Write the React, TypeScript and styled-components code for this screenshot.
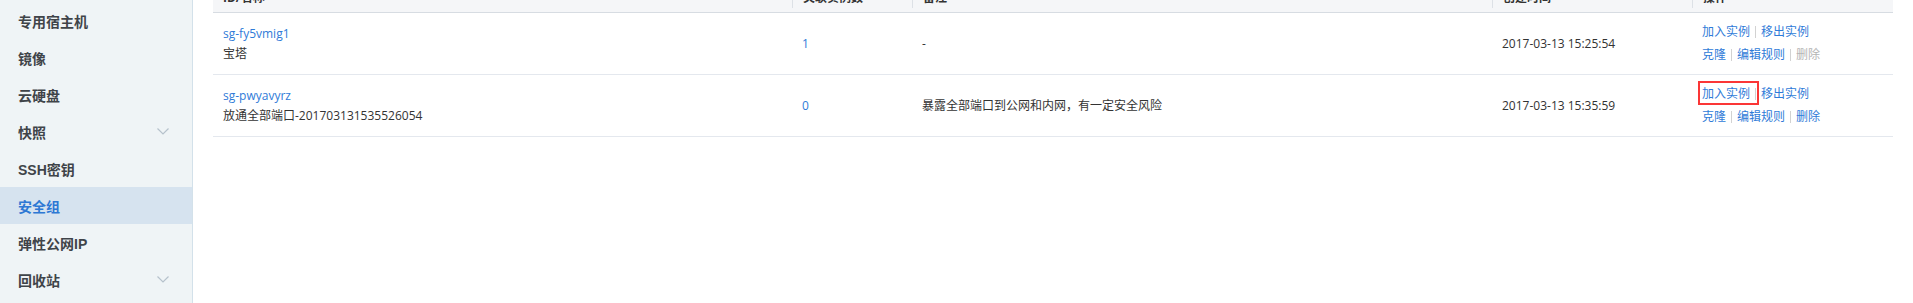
import React from "react";
import styled, { createGlobalStyle } from "styled-components";

const GlobalStyle = createGlobalStyle`
  html, body { margin: 0; padding: 0; background: #ffffff; overflow: hidden; }
  body { font-family: "Open Sans", "Noto Sans CJK SC", sans-serif; font-size: 12px; color: #333; }
  * { box-sizing: border-box; }
`;

const Page = styled.div`
  display: flex;
  height: 303px;
  overflow: hidden;
`;

const Sidebar = styled.nav`
  width: 193px;
  flex: 0 0 193px;
  background: #eff4f6;
  border-right: 1px solid #d3e1ea;
  padding-top: 2px;
`;

const NavItem = styled.div<{ $active?: boolean }>`
  height: 37px;
  display: flex;
  align-items: center;
  justify-content: space-between;
  padding: 0 23px 0 18px;
  font-family: "Liberation Sans", "Noto Sans CJK SC", sans-serif;
  font-size: 14px;
  font-weight: 700;
  color: ${(p) => (p.$active ? "#2d78d4" : "#3f4449")};
  background: ${(p) => (p.$active ? "#d6e3ef" : "transparent")};
`;

const Chevron = styled.svg`
  width: 12px;
  height: 7px;
  display: block;
`;

const Main = styled.main`
  flex: 1;
  padding: 0 20px;
  min-width: 0;
`;

const Table = styled.div`
  margin-top: -17px;
`;

const Grid = styled.div`
  display: grid;
  grid-template-columns: 579px 120px 580px 200px 1fr;
`;

const HeadRow = styled(Grid)`
  height: 30px;
  background: #f5f6f8;
  border-bottom: 1px solid #d7dce2;
  align-items: center;
`;

const HeadCell = styled.div<{ $first?: boolean }>`
  height: 20px;
  line-height: 20px;
  padding-left: 10px;
  font-weight: 700;
  color: #333;
  border-left: ${(p) => (p.$first ? "none" : "1px solid #dde1e6")};
`;

const BodyRow = styled(Grid)`
  height: 62px;
  border-bottom: 1px solid #e4e8ee;
  align-items: center;
`;

const Cell = styled.div`
  padding-left: 10px;
  line-height: 20px;
  color: #333;
`;

const Link = styled.span<{ $disabled?: boolean }>`
  color: ${(p) => (p.$disabled ? "#b4b4b4" : "#2f7bd8")};
  position: relative;
`;

const Line = styled.div`
  display: block;
`;

const ActionLine = styled.div`
  display: flex;
  align-items: center;
  height: 23px;
`;

const Sep = styled.span`
  width: 1px;
  height: 12px;
  background: #d2d2d2;
  margin: 0 5px 0 5px;
`;

const Highlight = styled.span`
  position: absolute;
  left: -4px;
  right: -9px;
  top: -3px;
  bottom: -1px;
  border: 2px solid #fb3636;
  pointer-events: none;
`;

const ChevronIcon = () => (
  <Chevron viewBox="0 0 12 7">
    <polyline points="0.5,0.5 6,6 11.5,0.5" fill="none" stroke="#b6c2cc" strokeWidth="1.2" />
  </Chevron>
);

const navItems = [
  { label: "专用宿主机" },
  { label: "镜像" },
  { label: "云硬盘" },
  { label: "快照", chevron: true },
  { label: "SSH密钥" },
  { label: "安全组", active: true },
  { label: "弹性公网IP" },
  { label: "回收站", chevron: true },
];

const rows = [
  {
    id: "sg-fy5vmig1",
    name: "宝塔",
    count: "1",
    note: "-",
    time: "2017-03-13 15:25:54",
    deleteDisabled: true,
    highlight: false,
  },
  {
    id: "sg-pwyavyrz",
    name: "放通全部端口-201703131535526054",
    count: "0",
    note: "暴露全部端口到公网和内网，有一定安全风险",
    time: "2017-03-13 15:35:59",
    deleteDisabled: false,
    highlight: true,
  },
];

export default function App() {
  return (
    <>
      <GlobalStyle />
      <Page>
        <Sidebar>
          {navItems.map((n) => (
            <NavItem key={n.label} $active={n.active}>
              <span>{n.label}</span>
              {n.chevron && <ChevronIcon />}
            </NavItem>
          ))}
        </Sidebar>
        <Main>
          <Table>
            <HeadRow>
              <HeadCell $first>ID/名称</HeadCell>
              <HeadCell>关联实例数</HeadCell>
              <HeadCell>备注</HeadCell>
              <HeadCell>创建时间</HeadCell>
              <HeadCell>操作</HeadCell>
            </HeadRow>
            {rows.map((r) => (
              <BodyRow key={r.id}>
                <Cell>
                  <Line>
                    <Link>{r.id}</Link>
                  </Line>
                  <Line>{r.name}</Line>
                </Cell>
                <Cell>
                  <Link>{r.count}</Link>
                </Cell>
                <Cell>{r.note}</Cell>
                <Cell>{r.time}</Cell>
                <Cell>
                  <ActionLine>
                    <Link>
                      加入实例
                      {r.highlight && <Highlight />}
                    </Link>
                    <Sep />
                    <Link>移出实例</Link>
                  </ActionLine>
                  <ActionLine>
                    <Link>克隆</Link>
                    <Sep />
                    <Link>编辑规则</Link>
                    <Sep />
                    <Link $disabled={r.deleteDisabled}>删除</Link>
                  </ActionLine>
                </Cell>
              </BodyRow>
            ))}
          </Table>
        </Main>
      </Page>
    </>
  );
}
